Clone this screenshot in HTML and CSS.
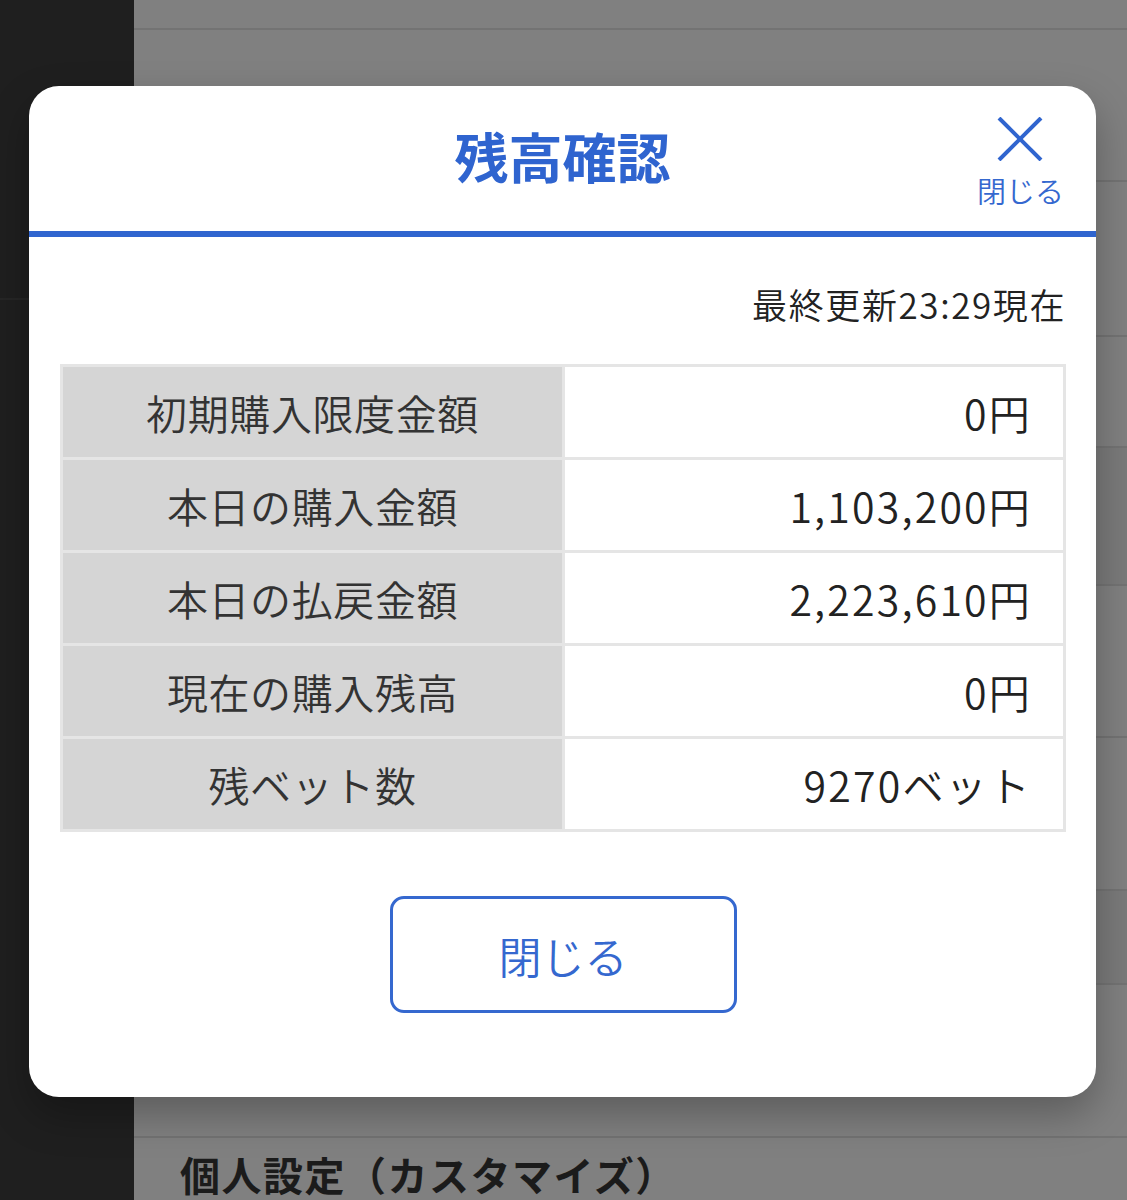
FILE: index.html
```html
<!DOCTYPE html>
<html lang="ja">
<head>
<meta charset="utf-8">
<title>残高確認</title>
<link rel="stylesheet" href="styles.css">
</head>
<body>
<div class="page">
  <aside class="sidebar">
    <div class="side-top"></div>
    <div class="side-rest"></div>
  </aside>
  <main class="main">
    <div class="row r1"></div>
    <div class="row r2"></div>
    <div class="row r3"></div>
    <div class="row r4"></div>
    <div class="row r5 dark"></div>
    <div class="row r6"></div>
    <div class="row r7"></div>
    <div class="row r8 dark"></div>
    <div class="row r9"></div>
    <div class="row r10"><h2 class="section-title">個人設定（カスタマイズ）</h2></div>
  </main>
</div>

<div class="modal">
  <div class="modal-header">
    <h1 class="modal-title">残高確認</h1>
    <button class="close-top" type="button">
      <svg class="close-icon" width="46" height="44" viewBox="0 0 46 44">
        <line x1="2" y1="1" x2="44" y2="43" stroke="#3065cf" stroke-width="4"/>
        <line x1="44" y1="1" x2="2" y2="43" stroke="#3065cf" stroke-width="4"/>
      </svg>
      <span class="close-label">閉じる</span>
    </button>
  </div>
  <div class="modal-body">
    <p class="updated">最終更新23:29現在</p>
    <div class="balance">
      <div class="label">初期購入限度金額</div><div class="value">0円</div>
      <div class="label">本日の購入金額</div><div class="value">1,103,200円</div>
      <div class="label">本日の払戻金額</div><div class="value">2,223,610円</div>
      <div class="label">現在の購入残高</div><div class="value">0円</div>
      <div class="label">残ベット数</div><div class="value">9270ベット</div>
    </div>
    <button class="close-btn" type="button">閉じる</button>
  </div>
</div>
</body>
</html>
```

FILE: styles.css
```css
html, body {
  margin: 0;
  padding: 0;
}
body {
  width: 1127px;
  height: 1200px;
  overflow: hidden;
  position: relative;
  background: #808080;
  font-family: "Noto Sans CJK JP", "Hiragino Sans", sans-serif;
}
.page {
  display: flex;
  height: 1200px;
}
.sidebar {
  width: 134px;
  flex: 0 0 134px;
  background: #1f1f1f;
  display: flex;
  flex-direction: column;
}
.side-top {
  height: 298px;
  border-bottom: 2px solid #262626;
}
.side-rest {
  flex: 1;
}
.main {
  flex: 1;
  display: flex;
  flex-direction: column;
  background: #808080;
}
.row {
  border-bottom: 2px solid #737373;
  box-sizing: border-box;
}
.row.dark {
  background: #7a7a7a;
}
.r1 { height: 30px; }
.r2 { height: 152px; }
.r3 { height: 155px; }
.r4 { height: 111px; }
.r5 { height: 138px; }
.r6 { height: 152px; }
.r7 { height: 153px; }
.r8 { height: 94px; }
.r9 { height: 153px; }
.r10 {
  flex: 1;
  border-bottom: none;
  padding: 12px 0 0 46px;
}
.section-title {
  margin: 0;
  font-size: 40px;
  line-height: 48px;
  font-weight: 700;
  color: #1b1b1b;
  letter-spacing: 1.5px;
  white-space: nowrap;
}

.modal {
  position: absolute;
  left: 29px;
  top: 86px;
  width: 1067px;
  height: 1011px;
  background: #fff;
  border-radius: 30px;
  box-shadow: 0 18px 40px rgba(0, 0, 0, 0.28);
  display: flex;
  flex-direction: column;
  overflow: hidden;
}
.modal-header {
  position: relative;
  height: 151px;
  flex: 0 0 151px;
  box-sizing: border-box;
  padding-bottom: 6px;
  border-bottom: 6px solid #3065cf;
  display: flex;
  align-items: center;
  justify-content: center;
}
.modal-title {
  margin: 0;
  font-size: 54px;
  line-height: 64px;
  font-weight: 700;
  color: #2f64cf;
}
.close-top {
  position: absolute;
  right: 32px;
  top: 31px;
  margin: 0;
  padding: 0;
  border: none;
  background: none;
  display: flex;
  flex-direction: column;
  align-items: center;
  gap: 12px;
  font-family: inherit;
  cursor: pointer;
}
.close-icon {
  display: block;
}
.close-label {
  font-size: 29px;
  line-height: 34px;
  font-weight: 350;
  color: #3568cf;
}
.modal-body {
  flex: 1;
  display: flex;
  flex-direction: column;
  padding: 46px 30px 0 31px;
}
.updated {
  margin: 0;
  text-align: right;
  font-size: 35px;
  line-height: 42px;
  font-weight: 350;
  color: #222;
  letter-spacing: 1.6px;
}
.balance {
  margin-top: 39px;
  display: grid;
  grid-template-columns: 499px 1fr;
  grid-auto-rows: 90px;
  gap: 3px;
  padding: 3px;
  background: #e5e5e5;
}
.label {
  background: #d5d5d5;
  display: flex;
  align-items: center;
  justify-content: center;
  font-size: 41px;
  font-weight: 350;
  color: #333;
  letter-spacing: 0.6px;
}
.value {
  background: #fff;
  display: flex;
  align-items: center;
  justify-content: flex-end;
  padding-right: 31px;
  font-size: 41px;
  font-weight: 350;
  color: #222;
  letter-spacing: 2.2px;
}
.close-btn {
  align-self: center;
  margin-top: 64px;
  width: 347px;
  height: 117px;
  box-sizing: border-box;
  border: 3px solid #3568cf;
  border-radius: 14px;
  background: #fff;
  color: #3568cf;
  font-family: inherit;
  font-size: 43px;
  font-weight: 350;
  cursor: pointer;
}
```
